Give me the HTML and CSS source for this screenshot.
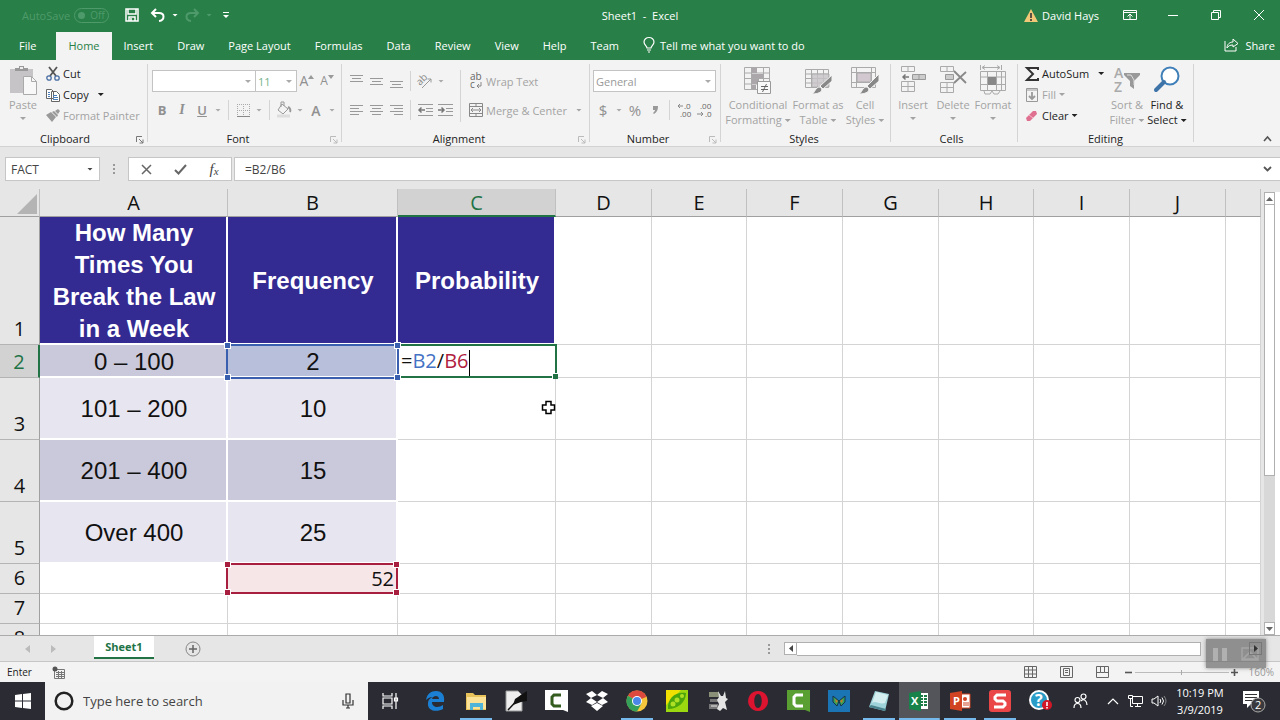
FILE: index.html
```html
<!DOCTYPE html>
<html lang="en">
<head>
    <meta charset="UTF-8">
    <meta name="viewport" content="width=device-width, initial-scale=1.0">
    <title>Sheet1 - Excel</title>
    <link rel="stylesheet" href="styles.css">
</head>
<body>
    <header class="titlebar">
        <div class="quick-access">
            <span class="autosave">AutoSave</span>
            <button class="toggle" aria-label="AutoSave off"><span class="knob"></span>Off</button>
            <button class="qa-btn save" aria-label="Save"><svg width="14" height="14" viewBox="0 0 14 14" fill="none" stroke="#fff" stroke-width="1.5"><path d="M1 1h12v12H1zM3 1v5h8V1M4 13V9h6v4M6 10v3"/></svg></button>
            <button class="qa-btn" aria-label="Undo"><svg width="16" height="14" viewBox="0 0 16 14" fill="none" stroke="#fff" stroke-width="2"><path d="M6 1L2 5l4 4M2 5h7c6 0 6 7 0 8"/></svg></button>
            <button class="caret" aria-label="Undo list"></button>
            <button class="qa-btn dim" aria-label="Redo"><svg width="16" height="14" viewBox="0 0 16 14" fill="none" stroke="#4f9a6b" stroke-width="2"><path d="M10 1l4 4-4 4M14 5H7c-6 0-6 7 0 8"/></svg></button>
            <button class="caret dim" aria-label="Redo list"></button>
            <button class="qa-btn" aria-label="Customize Quick Access Toolbar"><svg width="8" height="8" viewBox="0 0 8 8"><path d="M1 1h6v1H1zM1 4h6L4 7z" fill="#fff"/></svg></button>
        </div>
        <h1 class="doc-title">Sheet1&nbsp; -&nbsp; Excel</h1>
        <div class="window-controls">
            <button class="account"><svg width="14" height="13" viewBox="0 0 14 13"><path d="M7 0l7 13H0z" fill="#f0c878"/><path d="M7 4v5M7 10v2" stroke="#333" stroke-width="1.6"/></svg>David Hays</button>
            <button class="win-btn" aria-label="Ribbon Display Options"><svg width="14" height="12" viewBox="0 0 14 12" fill="none" stroke="#fff"><path d="M.5 1.500h13v9H.5zM.5 3.500h13M7 10V5M4.500 7.500L7 5l2.500 2.500"/></svg></button>
            <button class="win-btn" aria-label="Minimize"><svg width="12" height="12" viewBox="0 0 12 12" stroke="#fff"><path d="M1 6.500h10"/></svg></button>
            <button class="win-btn" aria-label="Restore"><svg width="12" height="12" viewBox="0 0 12 12" fill="none" stroke="#fff"><path d="M1.500 3.500h7v7h-7zM3.500 3.500v-2h7v7h-2"/></svg></button>
            <button class="win-btn" aria-label="Close"><svg width="12" height="12" viewBox="0 0 12 12" stroke="#fff"><path d="M1 1l10 10M11 1L1 11"/></svg></button>
        </div>
    </header>

    <nav class="tabs">
        <button class="tab file">File</button>
        <button class="tab active">Home</button>
        <button class="tab">Insert</button>
        <button class="tab">Draw</button>
        <button class="tab">Page Layout</button>
        <button class="tab">Formulas</button>
        <button class="tab">Data</button>
        <button class="tab">Review</button>
        <button class="tab">View</button>
        <button class="tab">Help</button>
        <button class="tab">Team</button>
        <button class="tab tell-me"><svg width="12" height="16" viewBox="0 0 12 16" fill="none" stroke="#fff" stroke-width="1.200"><path d="M4 11C4 9 1 8 1 5a5 4.500 0 0 1 10 0c0 3-3 4-3 6zM4 13h4M5 15h2"/></svg>Tell me what you want to do</button>
        <button class="tab share"><svg width="15" height="14" viewBox="0 0 15 14" fill="none" stroke="#fff"><path d="M1 3v10h11V9M3 10c0-4 3-6 6-6V1l5 4.500L9 9V7c-3 0-5 1-6 3z"/></svg>Share</button>
    </nav>

    <section class="ribbon">
        <div class="group clipboard">
            <div class="group-body">
                <button class="big paste dim"><svg width="28" height="30" viewBox="0 0 28 30"><path d="M1 4h23v24H1z" fill="#c6c4c6"/><path d="M6 6V3h4V1h5v2h4v3z" fill="#999"/><path d="M11 2h3v2h-3z" fill="#eee"/><path d="M14.500 11.500h8l5 5v13h-13z" fill="#f8f8f8" stroke="#aaa"/><path d="M22.500 11.500v5h5" fill="none" stroke="#aaa"/></svg><span>Paste</span><i class="caret"></i></button>
                <div class="stack">
                    <button class="small"><svg width="14" height="14" viewBox="0 0 14 14" fill="none"><path d="M3 0l7 9M11 0L4 9" stroke="#555" stroke-width="1.800"/><circle cx="3" cy="11" r="2.200" stroke="#4a6fa5" stroke-width="1.300"/><circle cx="11" cy="11" r="2.200" stroke="#4a6fa5" stroke-width="1.300"/></svg>Cut</button>
                    <button class="small"><svg width="14" height="14" viewBox="0 0 14 14" fill="#fff" stroke="#666"><path d="M.5 1.500h5l2 2v7h-7zM5.500 3.500h5l3 3v7h-8z"/><path d="M2 4.500h2M2 6.500h2M2 8.500h2M7 7.500h4M7 9.500h5M7 11.500h5" stroke="#4a7ebb"/></svg>Copy<i class="caret wide"></i></button>
                    <button class="small dim"><svg width="14" height="13" viewBox="0 0 14 13" fill="#999"><path d="M0 6l5-3 5 5-4 5zM6 3l2-1 4 4-1 2zM9 2l3-2 2 2-2 3z"/></svg>Format Painter</button>
                </div>
            </div>
            <div class="group-label">Clipboard<svg class="launcher" width="8" height="8" viewBox="0 0 8 8" fill="none" stroke="#777"><path d="M.5 6V.5H6M3 3l4 4M7 3.500V7H3.500"/></svg></div>
        </div>

        <div class="group font-group">
            <div class="group-body rows">
                <div class="row">
                    <span class="select-wrap font-name"><select aria-label="Font"><option></option></select><i class="caret"></i></span>
                    <span class="select-wrap font-size"><select aria-label="Font size"><option>11</option></select><i class="caret"></i></span>
                    <button class="tool grow" aria-label="Increase font size">A<svg width="6" height="4" viewBox="0 0 6 4"><path d="M0 4l3-4 3 4z" fill="#999"/></svg></button>
                    <button class="tool shrink" aria-label="Decrease font size">A<svg width="6" height="4" viewBox="0 0 6 4"><path d="M0 0h6L3 4z" fill="#999"/></svg></button>
                </div>
                <div class="row">
                    <button class="tool bold">B</button><button class="tool italic">I</button><button class="tool underline">U</button><button class="arrow" aria-label="Underline style"><i class="caret"></i></button>
                    <i class="sep"></i>
                    <button class="tool" aria-label="Borders"><svg width="13" height="13" viewBox="0 0 13 13" stroke="#aaa"><path d="M0 .5h13M0 6.500h13M.5 0v12M6.500 0v12M12.500 0v12" stroke-dasharray="1 1"/><path d="M0 12.500h13" stroke="#888"/></svg></button><button class="arrow" aria-label="Border styles"><i class="caret"></i></button>
                    <i class="sep"></i>
                    <button class="tool" aria-label="Fill color"><svg width="16" height="16" viewBox="0 0 16 16" fill="none" stroke="#999"><path d="M6 2l6 5-5 5-5-4zM5 5V0h3v4"/><path d="M12 5c2 1 3 3 2 5" stroke-width="2"/><path d="M1 14h13" stroke="#ddd" stroke-width="3"/></svg></button><button class="arrow" aria-label="Fill colors"><i class="caret"></i></button>
                    <button class="tool fontcolor">A</button><button class="arrow" aria-label="Font colors"><i class="caret"></i></button>
                </div>
            </div>
            <div class="group-label">Font<svg class="launcher" width="8" height="8" viewBox="0 0 8 8" fill="none" stroke="#bbb"><path d="M.5 6V.5H6M3 3l4 4M7 3.500V7H3.500"/></svg></div>
        </div>

        <div class="group align-group">
            <div class="group-body">
                <div class="rows">
                    <div class="row">
                        <button class="tool" aria-label="Top align"><svg width="13" height="14" viewBox="0 0 13 14" stroke="#999"><path d="M0 1.500h13M2 4.500h9M0 7.500h13"/></svg></button><button class="tool" aria-label="Middle align"><svg width="13" height="14" viewBox="0 0 13 14" stroke="#999"><path d="M0 4.500h13M2 7.500h9M0 10.500h13"/></svg></button><button class="tool" aria-label="Bottom align"><svg width="13" height="14" viewBox="0 0 13 14" stroke="#999"><path d="M0 7.500h13M2 10.500h9M0 13.500h13"/></svg></button>
                        <i class="sep"></i>
                        <button class="tool" aria-label="Orientation"><svg width="16" height="16" viewBox="0 0 16 16"><text x="0" y="10" font-size="10" fill="#888" transform="rotate(-45 5 8)">ab</text><path d="M5 15l9-9M10.500 6H14v3.500" fill="none" stroke="#999"/></svg></button><button class="arrow" aria-label="Orientation list"><i class="caret"></i></button>
                    </div>
                    <div class="row">
                        <button class="tool" aria-label="Align left"><svg width="13" height="12" viewBox="0 0 13 12" stroke="#999"><path d="M0 1.500h13M0 4.500h9M0 7.500h13M0 10.500h9"/></svg></button><button class="tool" aria-label="Center"><svg width="13" height="12" viewBox="0 0 13 12" stroke="#999"><path d="M0 1.500h13M2 4.500h9M0 7.500h13M2 10.500h9"/></svg></button><button class="tool" aria-label="Align right"><svg width="13" height="12" viewBox="0 0 13 12" stroke="#999"><path d="M0 1.500h13M4 4.500h9M0 7.500h13M4 10.500h9"/></svg></button>
                        <i class="sep"></i>
                        <button class="tool" aria-label="Decrease indent"><svg width="15" height="12" viewBox="0 0 15 12" fill="none" stroke="#999"><path d="M0 .5h15M8 4.500h7M8 7.500h7M0 11.500h15"/><path d="M7 6H1M3.500 3.500L1 6l2.500 2.500" stroke="#777" stroke-width="1.500"/></svg></button><button class="tool" aria-label="Increase indent"><svg width="15" height="12" viewBox="0 0 15 12" fill="none" stroke="#999"><path d="M0 .5h15M8 4.500h7M8 7.500h7M0 11.500h15"/><path d="M0 6h6M3.500 3.500L6 6 3.500 8.500" stroke="#777" stroke-width="1.500"/></svg></button>
                    </div>
                </div>
                <i class="sep tall"></i>
                <div class="rows">
                    <button class="small dim"><svg width="14" height="16" viewBox="0 0 14 16"><text x="1" y="7" font-size="10" fill="#666">ab</text><text x="1" y="15" font-size="10" fill="#666">c</text><path d="M12 9v4H8M10 11l-2 2 2 2" fill="none" stroke="#888"/></svg>Wrap Text</button>
                    <button class="small dim"><svg width="14" height="14" viewBox="0 0 14 14" fill="none" stroke="#888"><path d="M.5 .5h13v13H.5zM.5 3.500h13M.5 10.500h13M7 .5v3M7 10.500v3M2 7h10M4 5L2 7l2 2M10 5l2 2-2 2"/></svg>Merge &amp; Center<i class="caret wide"></i></button>
                </div>
            </div>
            <div class="group-label">Alignment<svg class="launcher" width="8" height="8" viewBox="0 0 8 8" fill="none" stroke="#bbb"><path d="M.5 6V.5H6M3 3l4 4M7 3.500V7H3.500"/></svg></div>
        </div>

        <div class="group number-group">
            <div class="group-body rows">
                <div class="row">
                    <span class="select-wrap number-format"><select aria-label="Number format"><option>General</option></select><i class="caret"></i></span>
                </div>
                <div class="row">
                    <button class="tool sign">$</button><button class="arrow" aria-label="Currency list"><i class="caret"></i></button><button class="tool sign">%</button><button class="tool comma" aria-label="Comma style"><svg width="5" height="8" viewBox="0 0 5 8"><path d="M0 0h5c0 4-1 6-4 8l-1-1c1-1 2-2 2-3H0z" fill="#999"/></svg></button>
                    <i class="sep"></i>
                    <button class="tool" aria-label="Increase decimal"><svg width="15" height="16" viewBox="0 0 15 16"><path d="M6 4H1M3 2L1 4l2 2" fill="none" stroke="#888"/><text x="7" y="7" font-size="8" fill="#666">.0</text><text x="3" y="15" font-size="8" fill="#666">.00</text></svg></button><button class="tool" aria-label="Decrease decimal"><svg width="15" height="16" viewBox="0 0 15 16"><text x="3" y="7" font-size="8" fill="#666">.00</text><path d="M0 12h6M4 10l2 2-2 2" fill="none" stroke="#888"/><text x="8" y="15" font-size="8" fill="#666">.0</text></svg></button>
                </div>
            </div>
            <div class="group-label">Number<svg class="launcher" width="8" height="8" viewBox="0 0 8 8" fill="none" stroke="#bbb"><path d="M.5 6V.5H6M3 3l4 4M7 3.500V7H3.500"/></svg></div>
        </div>

        <div class="group styles-group">
            <div class="group-body">
                <button class="big cond dim"><svg width="30" height="30" viewBox="0 0 30 30" fill="none" stroke="#aaa"><path d="M1.500 2.500h25v22h-25zM1.500 8h25M1.500 13.500h25M1.500 19h25M8.500 2v22M20.500 2v22"/><path d="M9 3h5v5H9zM9 9h11v4H9zM9 14h7v5H9zM9 20h4v4H9z" fill="#aaa6aa" stroke="none"/><path d="M14.500 16.500h13v12h-13z" fill="#f8f8f8" stroke="#999"/><path d="M18 21.500h7M18 24.500h7M23.500 19l-4 8" stroke="#666"/></svg><span>Conditional<br>Formatting<i class="caret"></i></span></button>
                <button class="big fmt dim"><svg width="28" height="30" viewBox="0 0 28 30" fill="none" stroke="#aaa"><path d="M1.500 4.500h23v18h-23zM1.500 9h23M1.500 13.500h23M1.500 18h23M7.500 4v18M13.500 4v18M19.500 4v18"/><path d="M8 9h17v13H8z" fill="#c8c4c8" opacity=".8"/><path d="M28 10v6l-9 8-3-3z" fill="#888" stroke="#f3f3f3"/><path d="M8 29c3-1 3-7 8-7 4 3 1 7-8 7z" fill="#888" stroke="#f3f3f3"/></svg><span>Format as<br>Table<i class="caret"></i></span></button>
                <button class="big dim"><svg width="28" height="30" viewBox="0 0 28 30" fill="none" stroke="#aaa"><path d="M.5 2.500h24v20H.5zM.5 7.500h24M.5 17.500h24M5.500 2v20M20.500 2v20"/><path d="M6 8h14v9H6z" fill="#d2c8d0"/><path d="M28 9v7l-9 8-3-3z" fill="#888" stroke="#f3f3f3"/><path d="M8 29c3-1 3-7 8-7 4 3 1 7-8 7z" fill="#888" stroke="#f3f3f3"/></svg><span>Cell<br>Styles<i class="caret"></i></span></button>
            </div>
            <div class="group-label">Styles</div>
        </div>

        <div class="group cells-group">
            <div class="group-body">
                <button class="big dim"><svg width="26" height="30" viewBox="0 0 26 30" fill="none" stroke="#aaa"><path d="M1.500 1.500h13v5h-13zM8 1.500v5M1.500 16.500h13v10h-13zM1.500 21.500h13M8 16.500v10"/><path d="M12.500 9.500h13v5h-13zM19 9.500v5" fill="#ccc" stroke="#999"/><path d="M9 12H3M5.500 9.500L3 12l2.500 2.500" stroke="#777" stroke-width="1.500"/></svg><span>Insert</span><i class="caret"></i></button>
                <button class="big dim"><svg width="28" height="30" viewBox="0 0 28 30" fill="none" stroke="#aaa"><path d="M1.500 1.500h13v5h-13zM8 1.500v5M1.500 17.500h13v10h-13zM1.500 22.500h13M8 17.500v10"/><path d="M6.500 9.500h8v5h-8z" fill="#ccc" stroke="#999"/><path d="M15 6l12 12M27 7L15 18" stroke="#888" stroke-width="1.800"/></svg><span>Delete</span><i class="caret"></i></button>
                <button class="big dim"><svg width="28" height="30" viewBox="0 0 28 30" fill="none" stroke="#aaa"><path d="M1.500 0v5M22.500 0v5M4 2.500h16M6 .5l-3 2 3 2M18 .5l3 2-3 2M1.500 6.500h25v19h-25zM1.500 12h25M1.500 19.500h25M8.500 6.500v19M17.500 6.500v19M22.500 6.500v19M5 26l1 3h5l2-3 2 3h4l2-3"/><path d="M9 12h8v8H9z" fill="#888" stroke="none"/></svg><span>Format</span><i class="caret"></i></button>
            </div>
            <div class="group-label">Cells</div>
        </div>

        <div class="group editing-group">
            <div class="group-body">
                <div class="stack">
                    <button class="small"><svg width="14" height="14" viewBox="0 0 14 14" fill="none" stroke="#333" stroke-width="2"><path d="M13 3V1H2l6 6-6 6h11v-2"/></svg>AutoSum<i class="caret wide"></i></button>
                    <button class="small dim"><svg width="14" height="14" viewBox="0 0 14 14" fill="none" stroke="#999"><path d="M1.500 .5h11v13h-11zM1 2h12" /><path d="M7 4v7M4 8l3 3 3-3" stroke-width="1.800"/></svg>Fill<i class="caret"></i></button>
                    <button class="small"><svg width="14" height="12" viewBox="0 0 14 12"><path d="M8 1h3l1 3-7 7H2L1 8z" fill="#e0708f"/><path d="M4 5l4 3" stroke="#f5b8c8"/></svg>Clear<i class="caret"></i></button>
                </div>
                <button class="big dim"><svg width="28" height="30" viewBox="0 0 28 30"><text x="1" y="13" font-size="14" font-weight="600" fill="#aaa">A</text><text x="1" y="27" font-size="14" font-weight="600" fill="#aaa">Z</text><path d="M11 8h16v2l-6 6v8l-4-3v-5l-6-6z" fill="#999"/><path d="M14 10h4l3 5v5" fill="none" stroke="#ddd"/></svg><span>Sort &amp;<br>Filter<i class="caret"></i></span></button>
                <button class="big"><svg width="28" height="30" viewBox="0 0 28 30"><circle cx="17" cy="11" r="8.500" fill="#fff" stroke="#3f7fb8" stroke-width="2"/><path d="M11 17l-8 8" stroke="#3f74a8" stroke-width="4" stroke-linecap="round"/></svg><span>Find &amp;<br>Select<i class="caret"></i></span></button>
            </div>
            <div class="group-label">Editing</div>
        </div>
        <button class="collapse" aria-label="Collapse the Ribbon"><svg width="9" height="6" viewBox="0 0 9 6" fill="none" stroke="#555" stroke-width="1.600"><path d="M1 5l3.500-4L8 5"/></svg></button>
    </section>

    <section class="formula-bar">
        <div class="name-box"><input type="text" value="FACT" aria-label="Name Box"><i class="caret"></i></div>
        <i class="dots"></i>
        <div class="fx-buttons">
            <button aria-label="Cancel"><svg width="11" height="11" viewBox="0 0 11 11" stroke="#666" stroke-width="1.500"><path d="M1 1l9 9M10 1l-9 9"/></svg></button>
            <button aria-label="Enter"><svg width="13" height="11" viewBox="0 0 13 11" fill="none" stroke="#666" stroke-width="2"><path d="M1 6l3.500 3.500L12 1"/></svg></button>
            <button class="fx" aria-label="Insert Function">f<small>x</small></button>
        </div>
        <div class="formula"><input type="text" value="=B2/B6" aria-label="Formula Bar"><svg width="9" height="6" viewBox="0 0 9 6" fill="none" stroke="#555" stroke-width="1.800"><path d="M1 1l3.500 3.500L8 1"/></svg></div>
    </section>

    <main class="workspace">
        <div class="sheet">
            <table class="grid">
                <colgroup>
                    <col class="c-head"><col class="c-a"><col class="c-b"><col class="c-c"><col class="c-96"><col class="c-95"><col class="c-96"><col class="c-96"><col class="c-95"><col class="c-96"><col class="c-96"><col>
                </colgroup>
                <thead>
                    <tr><th class="corner"></th><th>A</th><th>B</th><th class="current">C</th><th>D</th><th>E</th><th>F</th><th>G</th><th>H</th><th>I</th><th>J</th><th></th></tr>
                </thead>
                <tbody>
                    <tr class="r-title"><th>1</th><td class="title">How Many Times You Break the Law in a Week</td><td class="title">Frequency</td><td class="title">Probability</td><td></td><td></td><td></td><td></td><td></td><td></td><td></td><td></td></tr>
                    <tr class="r-edit"><th class="current">2</th><td class="band dark">0 – 100</td><td class="band dark ref">2<span class="range blue"><i></i><i></i><i></i><i></i></span></td><td class="editing">=<span class="ref-blue">B2</span>/<span class="ref-red">B6</span><i class="cursor"></i><span class="active-cell"></span></td><td></td><td></td><td></td><td></td><td></td><td></td><td></td><td></td></tr>
                    <tr class="r-tall"><th>3</th><td class="band light">101 – 200</td><td class="band light">10</td><td></td><td></td><td></td><td></td><td></td><td></td><td></td><td></td><td></td></tr>
                    <tr class="r-tall"><th>4</th><td class="band dark">201 – 400</td><td class="band dark">15</td><td></td><td></td><td></td><td></td><td></td><td></td><td></td><td></td><td></td></tr>
                    <tr class="r-tall"><th>5</th><td class="band light">Over 400</td><td class="band light">25</td><td></td><td></td><td></td><td></td><td></td><td></td><td></td><td></td><td></td></tr>
                    <tr><th>6</th><td></td><td class="total ref">52<span class="range red"><i></i><i></i><i></i><i></i></span></td><td></td><td></td><td></td><td></td><td></td><td></td><td></td><td></td><td></td></tr>
                    <tr><th>7</th><td></td><td></td><td></td><td></td><td></td><td></td><td></td><td></td><td></td><td></td><td></td></tr>
                    <tr><th>8</th><td></td><td></td><td></td><td></td><td></td><td></td><td></td><td></td><td></td><td></td><td></td></tr>
                </tbody>
            </table>
            <svg class="pointer" width="15" height="15" viewBox="0 0 15 15"><path d="M5 1.500h5V5h3.500v5H10v3.500H5V10H1.500V5H5z" fill="#fff" stroke="#000" stroke-width="1.500"/></svg>
        </div>
        <div class="vscroll">
            <button class="scroll-btn" aria-label="Scroll up"><svg width="7" height="4" viewBox="0 0 7 4"><path d="M0 4l3.500-4L7 4z" fill="#666"/></svg></button>
            <div class="vthumb"></div>
            <div class="vtrack"></div>
            <button class="scroll-btn" aria-label="Scroll down"><svg width="7" height="4" viewBox="0 0 7 4"><path d="M0 0h7L3.500 4z" fill="#666"/></svg></button>
        </div>
    </main>

    <section class="sheet-bar">
        <button class="nav-arrow" aria-label="Previous sheet"><svg width="5" height="8" viewBox="0 0 5 8"><path d="M5 0v8L0 4z" fill="#bbb"/></svg></button>
        <button class="nav-arrow" aria-label="Next sheet"><svg width="5" height="8" viewBox="0 0 5 8"><path d="M0 0v8l5-4z" fill="#bbb"/></svg></button>
        <button class="sheet-tab">Sheet1</button>
        <button class="add-sheet" aria-label="New sheet"><svg width="16" height="16" viewBox="0 0 16 16" fill="none" stroke="#888"><circle cx="8" cy="8" r="7"/><path d="M8 4v8M4 8h8" stroke="#666" stroke-width="1.500"/></svg></button>
        <i class="dots"></i>
        <div class="hscroll">
            <button class="scroll-btn" aria-label="Scroll left"><svg width="4" height="7" viewBox="0 0 4 7"><path d="M4 0v7L0 3.500z" fill="#444"/></svg></button>
            <div class="hthumb"></div>
            <div class="htrack"></div>
            <button class="scroll-btn covered" aria-label="Scroll right"><svg width="4" height="7" viewBox="0 0 4 7"><path d="M0 0v7l4-3.500z" fill="#333"/></svg></button>
        </div>
        <div class="recorder"><svg width="46" height="14" viewBox="0 0 46 14" fill="none"><path d="M0 1h5v13H0zM9 1h5v13H9z" fill="#b0b0b0"/><path d="M29 1h16v12H29zM30 12l7-7 7 7z" stroke="#a5a5a5" stroke-width="1.500"/></svg></div>
    </section>

    <footer class="status-bar">
        <span class="mode">Enter</span>
        <svg class="macro" width="13" height="13" viewBox="0 0 13 13" fill="none" stroke="#777"><path d="M2.500 3.500h10v9h-10zM4 6.500h8M4 8.500h8M4 10.500h8M6.500 5v7M9.500 5v7"/><circle cx="3" cy="3" r="2.500" fill="#555" stroke="none"/></svg>
        <div class="views">
            <button aria-label="Normal"><svg width="13" height="12" viewBox="0 0 13 12" fill="none" stroke="#666"><path d="M.5 .5h12v11H.5zM.5 4h12M.5 8h12M4.500 .5v11M8.500 .5v11"/></svg></button>
            <button aria-label="Page Layout"><svg width="13" height="12" viewBox="0 0 13 12" fill="none" stroke="#666"><path d="M.5 .5h12v11H.5zM3.500 2.500h6v7h-6zM5 4.500h3M5 6.500h3"/></svg></button>
            <button aria-label="Page Break Preview"><svg width="13" height="12" viewBox="0 0 13 12" fill="none" stroke="#666"><path d="M.5 .5h12v11H.5zM4.500 .5v6h4v-6M.5 6.500h4M8.500 6.500h4"/></svg></button>
        </div>
        <button class="zoom-btn" aria-label="Zoom out"><svg width="7" height="7" viewBox="0 0 7 7"><path d="M0 3.500h7" stroke="#555" stroke-width="1.600"/></svg></button>
        <div class="zoom-track"></div>
        <button class="zoom-btn" aria-label="Zoom in"><svg width="7" height="7" viewBox="0 0 7 7"><path d="M0 3.500h7M3.500 0v7" stroke="#555" stroke-width="1.600"/></svg></button>
        <span class="zoom-value">160%</span>
    </footer>

    <div class="taskbar">
        <button class="start" aria-label="Start"><svg width="16" height="16" viewBox="0 0 16 16" fill="#fff"><path d="M0 2l7-1v6.500H0zM8 1l8-1v7.500H8zM0 8.500h7V15l-7-1zM8 8.500h8V16l-8-1z"/></svg></button>
        <div class="search">
            <svg width="20" height="20" viewBox="0 0 20 20" fill="none" stroke="#222" stroke-width="2.500"><circle cx="10" cy="10" r="8.300"/></svg>
            <input type="text" placeholder="Type here to search" aria-label="Search">
            <svg width="12" height="16" viewBox="0 0 12 16" fill="none" stroke="#333" stroke-width="1.200"><path d="M4 1h4v9H4zM1 7v5h10V7M6 12v3M4 15h4"/></svg>
        </div>
        <button class="task-view" aria-label="Task View"><svg width="16" height="16" viewBox="0 0 16 16" fill="none" stroke="#fff" stroke-width="1.200"><path d="M1 0v3h9V0M1 5h9v6H1zM1 16v-3h9v3M14 0v16M12.500 5h3v3h-3z"/></svg></button>
        <div class="apps">
            <button class="app" aria-label="Edge"><svg width="20" height="20" viewBox="0 0 20 20"><path d="M1 9C2 3 6 0 11 0c6 0 9 4 8 11H7c0 6 7 6 11 3v4c-5 3-16 3-15-6 0-3 2-5 5-6-3 0-5 1-7 3zM7 8h7c0-4-6-4-7 0z" fill="#1b7fd4"/></svg></button>
            <button class="app open" aria-label="File Explorer"><svg width="20" height="20" viewBox="0 0 20 20"><path d="M0 2h7l2 2h11v15H0z" fill="#e8c35c"/><path d="M1 6h19v12H1z" fill="#fbe296"/><path d="M4 12h13v7h-3v-3H7v3H4z" fill="#4fb4d8"/></svg></button>
            <button class="app" aria-label="Editor"><svg width="22" height="22" viewBox="0 0 22 22"><path d="M1 1h12l4 4v16H1z" fill="#eee" stroke="#999"/><path d="M22 1L10 9l-2 6 8-3 6-1z" fill="#111"/><path d="M3 20L17 5" stroke="#111" stroke-width="1.500"/></svg></button>
            <button class="app" aria-label="Camtasia"><svg width="23" height="22" viewBox="0 0 23 22"><path d="M0 0h23v22l-5-2H0z" fill="#fff"/><path d="M16 5H9L7 7v7l2 2h7" fill="none" stroke="#335c1e" stroke-width="3"/></svg></button>
            <button class="app" aria-label="Dropbox"><svg width="22" height="20" viewBox="0 0 22 20" fill="#fff"><path d="M0 3l6-3 5 4-6 3zM11 4l5-4 6 3-5 4zM0 11l5-4 6 4-5 3zM11 11l6-4 5 4-6 3zM5 15l6-3 6 3-6 5z"/></svg></button>
            <button class="app open" aria-label="Chrome"><svg width="22" height="22" viewBox="0 0 22 22"><circle cx="11" cy="11" r="10.500" fill="#f6c63c"/><path d="M11 11L1.900 5.700A10.500 10.500 0 0 1 20.100 5.700L20 7z" fill="#dc4a3d"/><path d="M1.900 5.700A10.500 10.500 0 0 0 11 21.500l4.500-8L11 11z" fill="#34a05a"/><circle cx="11" cy="11" r="5" fill="#fff"/><circle cx="11" cy="11" r="4" fill="#4a87e8"/></svg></button>
            <button class="app" aria-label="PeaZip"><svg width="22" height="22" viewBox="0 0 22 22"><path d="M0 0h22v22H0z" fill="#9bd80f"/><path d="M0 0h15L0 15z" fill="#f1e000"/><path d="M2 19C1 8 10 1 20 3c0 9-8 16-18 16z" fill="#4da50c"/><g fill="#aee024"><circle cx="7" cy="14" r="2.500"/><circle cx="11" cy="10" r="2.500"/><circle cx="16" cy="6" r="2"/></g></svg></button>
            <button class="app" aria-label="Rabbit"><svg width="20" height="20" viewBox="0 0 20 20"><path d="M1 1h10v5H1z" fill="#8a8f78"/><path d="M2 8h10v3H2zM1 13h9v5H1z" fill="#777"/><path d="M3 15h6" stroke="#eee"/><path d="M10 0l3 5 2 0 2-5 1 7 2 1-3 3 2 8-4-2-3 3-3-2 2-5-2-4 2-3z" fill="#e4e4e4"/></svg></button>
            <button class="app" aria-label="Opera"><svg width="20" height="20" viewBox="0 0 20 20"><path fill-rule="evenodd" d="M10 0a10 10 0 1 0 .1 0zM10 3c5 0 5 14 0 14S5 3 10 3z" fill="#dd1430"/></svg></button>
            <button class="app" aria-label="Camtasia Recorder"><svg width="23" height="22" viewBox="0 0 23 22"><path d="M0 0h23v22l-5-2H0z" fill="#5a9f32"/><path d="M16 5H9L7 7v7l2 2h7" fill="none" stroke="#fff" stroke-width="3"/></svg></button>
            <button class="app" aria-label="Butterfly"><svg width="22" height="22" viewBox="0 0 22 22"><path d="M0 0h22v22H0z" fill="#1b74b4"/><path d="M11 11L5 6v6l4 4zM11 11l6-5v6l-4 4z" fill="#35a058" stroke="#15304a"/><path d="M10 11l-3-2 1 4zM12 11l3-2-1 4z" fill="#c77b28"/></svg></button>
            <button class="app open" aria-label="Notepad"><svg width="22" height="22" viewBox="0 0 22 22"><path d="M7 1l14 3-4 17-16-4z" fill="#9fd3da"/><path d="M8 2l12 3-3 8C12 15 7 10 4 13z" fill="#d5eff0"/><path d="M1 17l16 4 1-2-15-4z" fill="#49838d"/></svg></button>
            <button class="app open focused" aria-label="Excel"><svg width="20" height="20" viewBox="0 0 20 20"><path d="M10 2h9v16h-9z" fill="#fff"/><path d="M12 4h2v2h-2zM15 4h3v2h-3zM12 7h2v2h-2zM15 7h3v2h-3zM12 10h2v2h-2zM15 10h3v2h-3zM12 13h2v2h-2zM15 13h3v2h-3z" fill="#1e7b45"/><path d="M0 2l12-2v20L0 18z" fill="#17824a"/><text x="2" y="14" font-size="11" font-weight="700" fill="#fff">X</text></svg></button>
            <button class="app open" aria-label="PowerPoint"><svg width="20" height="20" viewBox="0 0 20 20"><path d="M10 3h10v14H10z" fill="#fff" stroke="#d04423"/><path d="M13 12h6M13 14h6" stroke="#d04423"/><circle cx="15" cy="8" r="2" fill="#d04423"/><path d="M0 2l12-2v20L0 18z" fill="#d04423"/><text x="3" y="14" font-size="11" font-weight="700" fill="#fff">P</text></svg></button>
            <button class="app open" aria-label="Snagit"><svg width="22" height="22" viewBox="0 0 22 22"><rect width="22" height="22" rx="3" fill="#ea4648"/><path d="M17 5H8L6 7v2l2 2h6l2 2v2l-2 2H5" fill="none" stroke="#fff" stroke-width="3"/></svg></button>
            <button class="app" aria-label="Help"><svg width="23" height="22" viewBox="0 0 23 22"><circle cx="10" cy="10" r="9" fill="#2a9cc8" stroke="#fff" stroke-width="2"/><text x="6" y="16" font-size="16" font-weight="700" fill="#fff">?</text><circle cx="18" cy="15" r="5" fill="#d21726"/><path d="M18 12v4M18 17v1.500" stroke="#fff" stroke-width="1.600"/></svg></button>
            <button class="app" aria-label="People"><svg width="15" height="16" viewBox="0 0 15 16" fill="none" stroke="#fff" stroke-width="1.200"><circle cx="4.500" cy="7" r="2.500"/><path d="M1 15c0-6 7-6 7 0"/><circle cx="10.500" cy="3.500" r="2.500"/><path d="M8 8c3-3 6 0 6 4"/></svg></button>
        </div>
        <div class="tray">
            <button aria-label="Show hidden icons"><svg width="12" height="7" viewBox="0 0 12 7" fill="none" stroke="#fff" stroke-width="1.200"><path d="M1 6l5-5 5 5"/></svg></button>
            <button aria-label="Network"><svg width="16" height="14" viewBox="0 0 16 14" fill="none" stroke="#fff"><path d="M4.500 2.500h10v7h-10zM7 12.500h6M9.500 9.500v3M.5 1.500h4v3h-4zM2.500 5v7.500H5"/></svg></button>
            <button aria-label="Volume"><svg width="16" height="14" viewBox="0 0 16 14" fill="none" stroke="#fff"><path d="M1 5h2l4-3v10L3 9H1zM9 5q1.500 2 0 4M11 3.500q3 3.500 0 7"/><path d="M13 2q4 5 0 10" stroke="#888"/></svg></button>
        </div>
        <div class="clock"><span>10:19 PM</span><span>3/9/2019</span></div>
        <button class="notify" aria-label="Notifications"><svg width="24" height="24" viewBox="0 0 24 24"><path d="M1 2h16v13H9l-4 4v-4H1z" fill="#fff"/><path d="M3 5.500h12M3 8.500h12M3 11.500h8" stroke="#333"/><circle cx="16" cy="16" r="7" fill="#3a3a3e" stroke="#aaa"/><text x="13" y="20" font-size="11" fill="#fff">2</text></svg></button>
    </div>
</body>
</html>
```
FILE: styles.css
```css
* { margin: 0; padding: 0; box-sizing: border-box; }
body {
    display: flex;
    flex-direction: column;
    height: 100vh;
    overflow: hidden;
    font-family: "Open Sans", "Noto Sans", sans-serif;
    font-size: 11px;
    line-height: 15px;
    color: #222;
    background: #e6e6e6;
}
button, input, select {
    font: inherit;
    color: inherit;
    background: none;
    border: none;
    outline: none;
}
button {
    display: flex;
    align-items: center;
    justify-content: center;
    flex-shrink: 0;
}
svg { display: block; flex-shrink: 0; overflow: visible; }
.caret {
    display: inline-block;
    width: 6px;
    height: 3px;
    flex-shrink: 0;
    background: currentColor;
    clip-path: polygon(0 0, 100% 0, 50% 100%);
}

/* title bar */
.titlebar {
    display: grid;
    grid-template-columns: 1fr auto 1fr;
    align-items: center;
    height: 30px;
    flex-shrink: 0;
    background: #287f47;
    color: #fff;
}
.quick-access { display: flex; align-items: center; padding-left: 22px; }
.autosave { color: #4f9a6b; margin-right: 4px; }
.toggle {
    width: 35px;
    height: 15px;
    gap: 5px;
    border: 1px solid #4f9a6b;
    border-radius: 8px;
    color: #4f9a6b;
    font-size: 10px;
}
.knob { width: 7px; height: 7px; border-radius: 50%; background: #4f9a6b; }
.qa-btn { width: 24px; height: 24px; }
.qa-btn.save { margin: 0 2px 0 11px; }
.quick-access .caret { margin: 0 2px; }
.quick-access .dim { color: #4f9a6b; }
.doc-title { font-size: 11px; font-weight: 400; }
.window-controls { display: flex; align-items: center; justify-content: flex-end; }
.account { gap: 4px; margin-right: 9px; }
.win-btn { width: 43px; height: 30px; }

/* tabs */
.tabs {
    display: flex;
    height: 30px;
    padding-top: 2px;
    flex-shrink: 0;
    background: #287f47;
    color: #fff;
}
.tab { padding: 0 12px 2px; }
.tab.file { margin: 0 8px 0 7px; }
.tab.active { background: #f3f3f3; color: #287f47; }
.tell-me { gap: 5px; }
.share { gap: 6px; margin-left: auto; padding: 0 5px 2px; }

/* ribbon */
.ribbon {
    display: flex;
    height: 87px;
    flex-shrink: 0;
    background: #f3f3f3;
    border-bottom: 1px solid #d2d2d2;
}
.group {
    position: relative;
    display: flex;
    flex-direction: column;
    flex-shrink: 0;
    padding-top: 3px;
}
.group::after {
    content: "";
    position: absolute;
    top: 4px;
    right: 0;
    width: 1px;
    height: 78px;
    background: #d4d4d4;
}
.group-body { display: flex; height: 68px; }
.group-label { position: relative; text-align: center; padding-right: 18px; }
.launcher { position: absolute; right: 4px; top: 5px; }
.clipboard { width: 148px; }
.font-group { width: 194px; padding-left: 4px; }
.align-group { width: 248px; padding-left: 4px; }
.number-group { width: 131px; padding-left: 3px; }
.styles-group { width: 170px; padding-left: 4px; }
.cells-group { width: 127px; padding-left: 2px; }
.editing-group { width: 176px; padding-left: 7px; }
.styles-group .group-label,
.cells-group .group-label,
.editing-group .group-label { padding-right: 8px; }
.dim { color: #a3a3a3; }
.big { flex-direction: column; justify-content: flex-start; width: 40px; white-space: nowrap; }
.big svg { margin: 2px 0; }
.big > .caret { margin-top: 5px; }
.big span .caret { margin: 0 0 2px 3px; }
.big.paste { width: 46px; }
.big.cond { width: 66px; }
.big.fmt { width: 54px; }
.stack { display: flex; flex-direction: column; }
.stack .small { height: 21px; }
.small { justify-content: flex-start; gap: 3px; white-space: nowrap; }
.small .wide { margin-left: 6px; }
.editing-group .stack { width: 82px; }
.rows { display: flex; flex-direction: column; gap: 7px; padding-top: 7px; }
.group-body .rows { padding-top: 7px; }
.row, .rows .small { display: flex; align-items: center; height: 22px; }
.align-group .rows { width: 111px; }
.align-group .rows:last-child { width: 116px; padding-left: 5px; }
.tool { width: 20px; height: 22px; color: #909090; }
.arrow { width: 12px; height: 22px; color: #aaa; }
.sep { width: 1px; height: 20px; margin: 0 4px; background: #d4d4d4; }
.sep.tall { height: 52px; margin: 7px 3px 0; }
.bold { font-weight: 700; font-size: 13px; }
.italic { font: italic 700 14px "Liberation Serif", serif; }
.underline { font-weight: 600; font-size: 13px; text-decoration: underline; }
.fontcolor { font-weight: 600; font-size: 14px; }
.grow, .shrink { align-items: flex-start; font-size: 14px; line-height: 22px; }
.grow svg, .shrink svg { margin-top: 5px; }
.shrink { font-size: 12px; }
.sign { font-size: 15px; }
.select-wrap {
    position: relative;
    display: flex;
    height: 22px;
    border: 1px solid #c3c3c3;
    background: #fff;
    color: #999;
}
.select-wrap select { appearance: none; width: 100%; padding: 0 2px; }
.select-wrap .caret { position: absolute; right: 4px; top: 9px; color: #aaa; }
.font-name { width: 104px; }
.font-size { width: 41px; border-left: none; color: #76b389; }
.number-format { width: 123px; }
.collapse { align-self: flex-end; margin: 0 8px 4px auto; }

/* formula bar */
.formula-bar {
    display: flex;
    height: 42px;
    padding-top: 10px;
    flex-shrink: 0;
    font-size: 12px;
}
.name-box, .fx-buttons, .formula {
    display: flex;
    align-items: center;
    height: 24px;
    background: #fff;
    border: 1px solid #c6c6c6;
}
.name-box { width: 95px; margin-left: 5px; padding: 0 6px 0 5px; color: #444; }
.name-box input { flex: 1; width: 0; }
.dots { width: 2px; height: 11px; margin: 7px 13px; background: repeating-linear-gradient(#999 0 2px, transparent 2px 4px); }
.fx-buttons { width: 104px; }
.fx-buttons button { flex: 1; }
.fx { font: italic 15px "Liberation Serif", serif; color: #444; }
.fx small { font-size: 11px; margin-top: 4px; }
.formula { flex: 1; margin-left: 2px; padding: 0 8px 0 10px; border-right: none; color: #444; }
.formula input { flex: 1; }

/* worksheet */
.workspace { display: flex; flex: 1; min-height: 0; border-bottom: 1px solid #ababab; }
.sheet { position: relative; flex: 1; overflow: hidden; }
.grid {
    width: 100%;
    table-layout: fixed;
    border-collapse: separate;
    border-spacing: 0;
    font-size: 20px;
    line-height: 29px;
    color: #111;
}
.c-head { width: 40px; }
.c-a { width: 188px; }
.c-b { width: 170px; }
.c-c { width: 158px; }
.c-96 { width: 96px; }
.c-95 { width: 95px; }
.grid th {
    font-weight: 400;
    background: #e6e6e6;
    border-right: 1px solid #c0c0c0;
    border-bottom: 1px solid #b4b4b4;
}
.grid thead th { height: 28px; line-height: 26px; padding-top: 1px; border-bottom-color: #a0a0a0; }
.grid thead .current { background: #d2d2d2; color: #217346; border-bottom: 2px solid #217346; line-height: 25px; }
.corner::after {
    content: "";
    display: block;
    width: 20px;
    height: 20px;
    margin: 2px 2px 0 auto;
    background: #b4b4b4;
    clip-path: polygon(100% 0, 100% 100%, 0 100%);
}
.grid tbody th { vertical-align: bottom; line-height: 27px; padding-bottom: 2px; border-right-color: #a0a0a0; }
.grid tbody .current { background: #d2d2d2; color: #217346; border-right: 2px solid #217346; }
.grid td {
    height: 30px;
    background: #fff;
    border-right: 1px solid #d4d4d4;
    border-bottom: 1px solid #d4d4d4;
}
.grid .r-edit td, .grid .r-edit th { height: 33px; }
.grid .r-tall td { height: 62px; }
.grid td.title {
    padding: 0 8px;
    border: none;
    background: #332a92;
    color: #fff;
    font: 700 24px/32px "Liberation Sans", Arial, sans-serif;
    text-align: center;
    box-shadow: inset -2px -2px #fff;
}
.grid td.band {
    border: none;
    font: 24px/30px "Liberation Sans", Arial, sans-serif;
    text-align: center;
    box-shadow: inset -2px -2px #fff;
}
.grid td.dark { background: #cac9db; }
.grid td.light { background: #e7e6f0; }
.grid td.ref { position: relative; }
.grid td.dark.ref { background: #b8bfda; }
.grid td.total { background: #f7e6e8; text-align: right; padding-right: 3px; }
.range { position: absolute; inset: -1px -1px -1px -2px; border: 2px solid; z-index: 2; }
.range i { position: absolute; width: 7px; height: 7px; background: currentColor; border: 1px solid #fff; }
.range i:nth-child(1) { left: -4px; top: -4px; }
.range i:nth-child(2) { right: -4px; top: -4px; }
.range i:nth-child(3) { left: -4px; bottom: -4px; }
.range i:nth-child(4) { right: -4px; bottom: -4px; }
.blue { color: #3a5fae; }
.red { color: #a81e3e; }
.grid td.editing { position: relative; padding-left: 3px; white-space: nowrap; }
.ref-blue { color: #4472c4; }
.ref-red { color: #b0213f; }
.cursor { display: inline-block; width: 1px; height: 26px; background: #000; vertical-align: middle; }
.active-cell { position: absolute; inset: -1px -2px -1px -1px; border: 2px solid #217346; }
.active-cell::after {
    content: "";
    position: absolute;
    right: -3px;
    bottom: -3px;
    width: 5px;
    height: 5px;
    background: #217346;
    border: 1px solid #fff;
    border-width: 1px 0 0 1px;
}
.pointer { position: absolute; left: 541px; top: 211px; z-index: 3; }
.vscroll { display: flex; flex-direction: column; width: 16px; margin: 3px 0 0 3px; border-right: 5px solid #fff; }
.scroll-btn { width: 13px; height: 13px; background: #fff; border: 1px solid #b0b0b0; }
.vscroll .scroll-btn { width: 11px; }
.vthumb { flex: 65; background: #fff; border: 1px solid #b0b0b0; border-top: none; }
.vtrack { flex: 35; background: #d8d8d8; }

/* sheet tabs */
.sheet-bar { position: relative; display: flex; height: 26px; flex-shrink: 0; border-bottom: 1px solid #c6c6c6; }
.nav-arrow { width: 26px; }
.nav-arrow:first-child { margin-left: 14px; }
.sheet-tab {
    height: 23px;
    width: 60px;
    margin-left: 28px;
    background: #fff;
    border-bottom: 2px solid #217346;
    color: #217346;
    font-weight: 700;
}
.add-sheet { margin: 0 auto 0 31px; }
.sheet-bar .dots { margin: 8px 14px 0; }
.hscroll { display: flex; flex-basis: 478px; height: 14px; margin-top: 6px; margin-right: 18px; }
.hthumb { flex: 1; background: #fff; border: 1px solid #b0b0b0; border-left: none; }
.htrack { width: 10%; }
.covered { position: relative; z-index: 3; background: none; border-color: #777; }
.recorder {
    position: absolute;
    right: 14px;
    top: 3px;
    display: flex;
    align-items: center;
    justify-content: center;
    width: 60px;
    height: 29px;
    background: rgba(110, 110, 110, .72);
    box-shadow: 0 0 4px rgba(90, 90, 90, .7);
    z-index: 2;
}

/* status bar */
.status-bar { display: flex; align-items: center; height: 20px; flex-shrink: 0; padding: 0 6px 0 7px; background: #f3f3f3; }
.mode { font-size: 10px; }
.macro { margin-left: 20px; }
.views { display: flex; gap: 23px; margin-left: auto; margin-right: 15px; }
.zoom-btn { width: 10px; }
.zoom-track {
    width: 94px;
    height: 5px;
    margin: 0 1px;
    background: linear-gradient(#aaa, #aaa) center / 1px 5px no-repeat, linear-gradient(#bbb, #bbb) center / 100% 1px no-repeat;
}
.zoom-value { margin-left: 9px; color: #999; font-size: 10px; }

/* taskbar */
.taskbar { display: flex; height: 38px; flex-shrink: 0; background: #2b2c33; color: #fff; }
.start { width: 45px; }
.search { display: flex; align-items: center; width: 323px; padding: 0 14px 0 9px; background: #f2f2f2; color: #333; }
.search input { flex: 1; min-width: 0; margin-left: 9px; font-size: 13px; }
.search input::placeholder { color: #444; opacity: 1; }
.task-view { width: 44px; margin-right: 3px; }
.apps { display: flex; flex: 1; }
.app { flex: 1; }
.open { background: linear-gradient(#76b9ed, #76b9ed) center bottom / 32px 2px no-repeat; }
.focused { background-color: #53555a; background-size: 100% 2px; }
.tray { display: flex; align-items: center; }
.tray button { width: 23px; }
.clock { display: flex; flex-direction: column; align-items: center; justify-content: center; width: 56px; margin-left: 2px; line-height: 17px; white-space: nowrap; }
.notify { width: 52px; }
```
